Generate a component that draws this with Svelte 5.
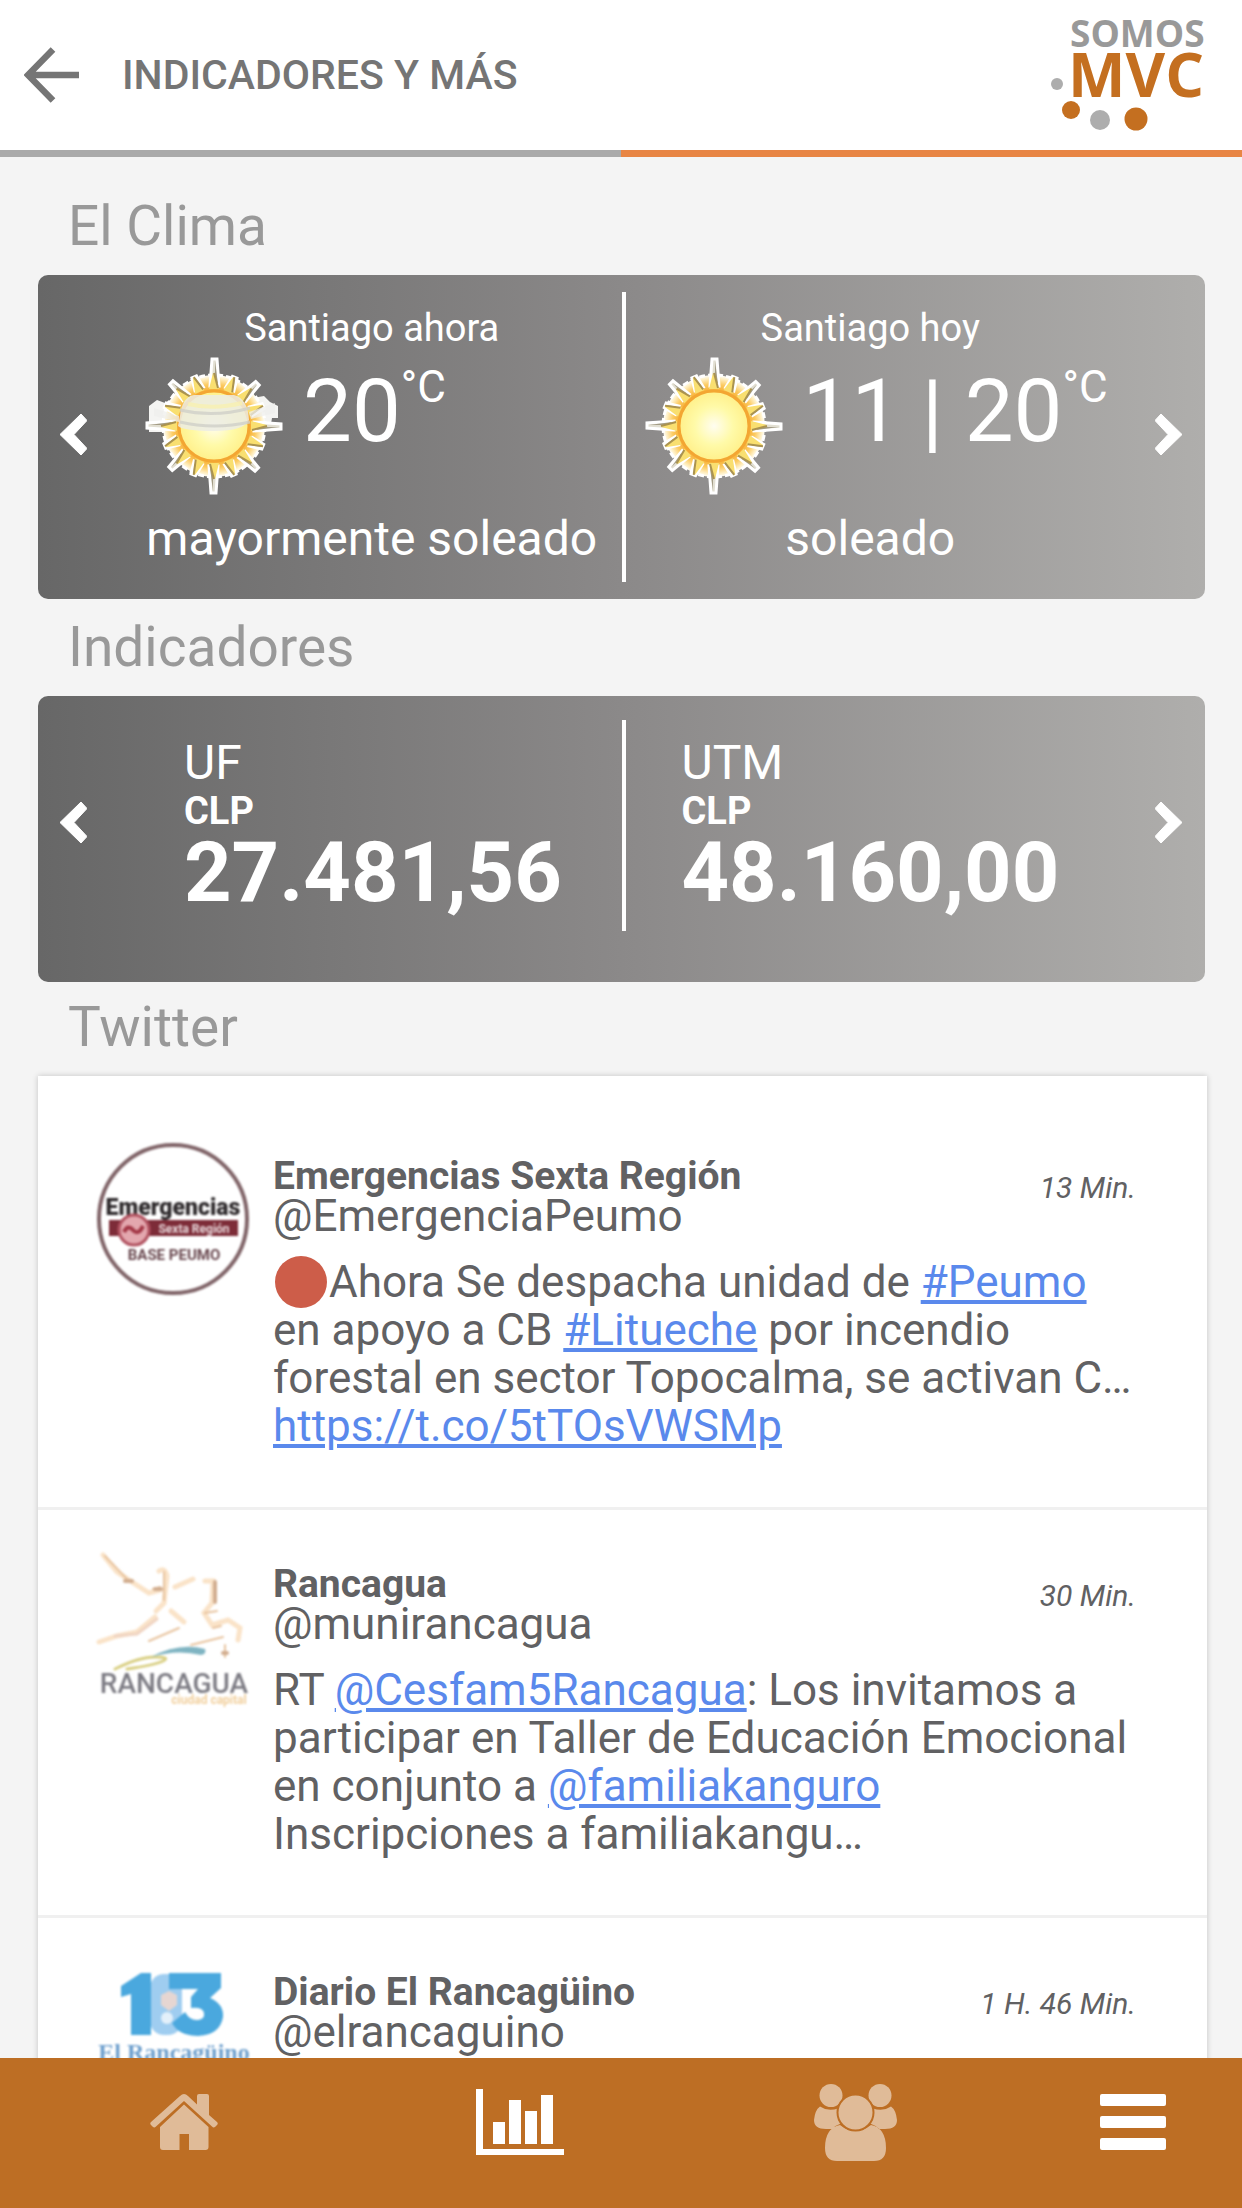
<script>
  const weather = [
    { place: 'Santiago ahora', temp: '20', sky: 'mayormente soleado', hazy: true },
    { place: 'Santiago hoy', temp: '11 | 20', sky: 'soleado', hazy: false }
  ];
  const indicators = [
    { name: 'UF', unit: 'CLP', value: '27.481,56' },
    { name: 'UTM', unit: 'CLP', value: '48.160,00' }
  ];
  const tweets = [
    {
      avatar: 'emergencias', name: 'Emergencias Sexta Región', handle: '@EmergenciaPeumo', time: '13 Min.', alert: true,
      parts: [
        { text: 'Ahora Se despacha unidad de ' },
        { link: '#Peumo' },
        { text: ' en apoyo a CB ' },
        { link: '#Litueche' },
        { text: ' por incendio forestal en sector Topocalma, se activan C… ' },
        { link: 'https://t.co/5tTOsVWSMp' }
      ]
    },
    {
      avatar: 'rancagua', name: 'Rancagua', handle: '@munirancagua', time: '30 Min.', alert: false,
      parts: [
        { text: 'RT ' },
        { link: '@Cesfam5Rancagua' },
        { text: ': Los invitamos a participar en Taller de Educación Emocional en conjunto a ' },
        { link: '@familiakanguro' },
        { text: ' Inscripciones a familiakangu…' }
      ]
    },
    { avatar: 'diario', name: 'Diario El Rancagüino', handle: '@elrancaguino', time: '1 H. 46 Min.', alert: false, parts: [] }
  ];
  // Sixteen rays: long on the axes and diagonals, short between them.
  const rays = Array.from({ length: 16 }, (_, i) => ({
    angle: i * 22.5,
    tip: i % 4 === 0 ? 67 : i % 2 === 0 ? 61 : 53
  }));
</script>

{#snippet sun(hazy)}
  <svg class="sun" viewBox="-74 -74 148 148" aria-hidden="true">
    <defs>
      <radialGradient id="core"><stop offset="0" stop-color="#fffdf0" /><stop offset=".55" stop-color="#fffaa8" /><stop offset="1" stop-color="#fff08a" /></radialGradient>
      <radialGradient id="halo"><stop offset=".66" stop-color="#f5a92c" /><stop offset=".82" stop-color="#fccb62" /><stop offset=".95" stop-color="#fff3cf" /><stop offset="1" stop-color="#fffdf6" /></radialGradient>
    </defs>
    {#if hazy}
      <path d="M-65-20l8-6 8 3 10-6V6h-26zM38-28l12-2 6 6 8 4V-8h-6l-2 12H38z" fill="#f4f4f2" />
    {/if}
    <circle r="51" fill="url(#halo)" stroke="#fff" stroke-width="3" stroke-dasharray="6 3" />
    {#each rays as ray}
      <g transform="rotate({ray.angle})">
        <path d="M-4-40L-2 {-ray.tip}H3L5-40z" fill="#e2dfd2" stroke="#fff" stroke-width="3" />
        <path d="M1-46L1 {-ray.tip + 2}L4-42z" fill="#a39c86" />
        <path d="M-5-37L-1-53L5-37z" fill="#f9df70" />
        <path d="M4-38L0-53" stroke="#ab934f" stroke-width="2" />
      </g>
    {/each}
    <circle r="35" fill="url(#core)" stroke="#f3a632" stroke-width="3" />
    {#if hazy}
      <path d="M-34-10Q-32-29-20-31H20Q34-27 35-6Q30 5 0 5T-36 0z" fill="#ecece4" opacity=".85" />
      <path d="M-34-16Q0-8 36-18M-34-4Q0 4 36-4" fill="none" stroke="#cfcfc8" stroke-width="3" opacity=".8" />
      <path d="M-26-22Q0-16 28-23" fill="none" stroke="#f7f0b0" stroke-width="4" opacity=".8" />
      <path d="M35-14l26-9v10l-24 6zM-35-10l-25-8v8l25 6z" fill="#efefec" opacity=".75" />
    {/if}
  </svg>
{/snippet}

{#snippet arrow(label, next)}
  <button class="arrow" class:next aria-label={label}>
    <svg viewBox="0 0 27 41" aria-hidden="true">
      <path d={next ? 'M0 6.500L6 0 27 20.500 6 41 0 34.500 13 20.500z' : 'M27 6.500L21 0 0 20.500 21 41 27 34.500 14 20.500z'} fill="#fff" stroke="#fff" stroke-linejoin="round" />
    </svg>
  </button>
{/snippet}

<div class="app">
  <header>
    <button class="back" aria-label="Volver">
      <svg viewBox="0 0 56 56" aria-hidden="true"><path d="M55 28H5M29 2.500L4 28l25 25.500" fill="none" stroke="#757575" stroke-width="6.500" /></svg>
    </button>
    <h1>INDICADORES Y MÁS</h1>
    <svg class="logo" viewBox="0 0 168 120" role="img" aria-label="Somos MVC">
      <text x="20" y="32" font-size="37" fill="#999">SOMOS</text>
      <text x="18" y="82" font-size="61" fill="#c46f20">MVC</text>
      <circle cx="7" cy="69" r="6" fill="#adadad" />
      <circle cx="21" cy="95" r="9" fill="#c46f20" />
      <circle cx="50" cy="105" r="10" fill="#adadad" />
      <circle cx="86" cy="104" r="11.500" fill="#c46f20" />
    </svg>
  </header>
  <div class="stripe"></div>

  <main>
    <h2>El Clima</h2>
    <section class="panel" aria-label="El Clima">
      {@render arrow('Anterior', false)}
      <div class="slides">
        {#each weather as w}
          <article class="weather">
            <p class="place">{w.place}</p>
            <div class="now">
              {@render sun(w.hazy)}
              <span class="temp">{w.temp}</span><span class="degree">°C</span>
            </div>
            <p class="sky">{w.sky}</p>
          </article>
        {/each}
      </div>
      {@render arrow('Siguiente', true)}
    </section>

    <h2>Indicadores</h2>
    <section class="panel money" aria-label="Indicadores">
      {@render arrow('Anterior', false)}
      <div class="slides">
        {#each indicators as item}
          <article class="indicator">
            <p class="code">{item.name}</p>
            <p class="unit">{item.unit}</p>
            <p class="value">{item.value}</p>
          </article>
        {/each}
      </div>
      {@render arrow('Siguiente', true)}
    </section>

    <h2>Twitter</h2>
    <section class="feed" aria-label="Twitter">
      {#each tweets as t}
        <article class="tweet">
          {#if t.avatar === 'emergencias'}
            <svg class="avatar" viewBox="0 0 162 162" aria-hidden="true">
              <circle cx="80" cy="82" r="74" fill="#fff" stroke="#806468" stroke-width="4" />
              <text x="80" y="78" font-size="23" font-weight="900" fill="#2e2a2c" text-anchor="middle">Emergencias</text>
              <path d="M16 83H145V99H16z" fill="#7d2c38" />
              <text x="101" y="96" font-size="12" font-weight="700" fill="#eadadd" text-anchor="middle">Sexta Región</text>
              <circle cx="41" cy="93" r="15" fill="#e3a7ae" stroke="#b15260" stroke-width="3" />
              <path d="M31 95q4-8 9-2t10-4" fill="none" stroke="#a33746" stroke-width="4" />
              <text x="81" y="123" font-size="15" font-weight="700" fill="#69484f" text-anchor="middle">BASE PEUMO</text>
            </svg>
          {:else if t.avatar === 'rancagua'}
            <svg class="avatar" viewBox="0 0 162 162" aria-hidden="true">
              <g fill="none" stroke-linecap="round">
                <path d="M10 10L24 27 36 35 56 48 67 45M66 26q6-4 8 5l-3 27-8 8M82 42l18-8M112 36h8l-1 22-8 10 8 12 16-5 12 8-2 12M62 72L44 87 24 91 6 97M78 66l13 11" stroke="#fae3c8" stroke-width="5" />
                <path d="M12 11L34 34M60 44l7-2M71 27v28M112 68l12-2M120 83l8-2M132 100v12M56 96L86 83M98 100l32-8" stroke="#e8c49f" stroke-width="2" />
                <path d="M32 36h7M122 37v20M62 44h6M130 108h4" stroke="#d2ae90" stroke-width="4" />
                <path d="M64 74L44 89 22 91" stroke="#f0d5c3" stroke-width="3" />
                <path d="M22 124Q46 112 62 112T70 116 34 124" stroke="#d9cf83" stroke-width="3" />
              </g>
              <path d="M58 112Q86 97 112 104 114 109 108 110 84 104 58 112z" fill="#7fb4c2" />
              <text x="81" y="148" font-size="28" font-weight="500" fill="#7c7b83" text-anchor="middle">RANCAGUA</text>
              <text x="116" y="159" font-size="12" font-weight="700" fill="#f1cf9c" text-anchor="middle">ciudad capital</text>
            </svg>
          {:else}
            <svg class="avatar" viewBox="0 0 162 162" aria-hidden="true">
              <rect x="57" y="21" width="32" height="61" rx="14" fill="#9fcdf0" />
              <path transform="translate(0 -2)" d="M28 35L48 22H58V84H38V43L28 46zM76 22H128V37L117 47Q131 53 130 66 127 84 105 85 86 85 79 72L92 61Q97 70 105 69 112 68 111 62 110 56 98 57V46L105 38H76z" fill="#4aa8de" />
              <path d="M68 42l8-4 8 4v10l-8 6-8-6z" fill="#e6d6d2" />
              <circle cx="74" cy="65" r="6" fill="#e3f0fa" />
              <text class="serif" x="81" y="107" font-size="24" font-weight="700" fill="#6d9fcd" text-anchor="middle">El Rancagüino</text>
            </svg>
          {/if}
          <div class="content">
            <div class="head">
              <div class="who">
                <h3>{t.name}</h3>
                <p>{t.handle}</p>
              </div>
              <span class="time">{t.time}</span>
            </div>
            <p class="body">{#if t.alert}<svg class="dot" viewBox="0 0 52 52" aria-hidden="true"><circle cx="26" cy="26" r="26" fill="#cd5d49" /></svg>{/if}{#each t.parts as part}{#if part.link}<a href="#tweet">{part.link}</a>{:else}{part.text}{/if}{/each}</p>
          </div>
        </article>
      {/each}
    </section>
  </main>

  <nav aria-label="Principal">
    <a href="#inicio" aria-label="Inicio">
      <svg class="home" viewBox="0 0 68 56" aria-hidden="true" fill="#e0bb98">
        <path d="M34 0Q36 0 38 2L47 10.500V2Q47 0 49 0H57Q59 0 59 2V21L67 28Q68.500 29.500 67 31L65 33Q63.500 34 62 32.500L34 7 6 32.500Q4.500 34 3 33L1 31Q-.5 29.500 1 28L30 2Q32 0 34 0z" />
        <path d="M34 10.500L58.500 33V53Q58.500 56 55.500 56H39V40H29.500V56H13Q10 56 10 53V33z" />
      </svg>
    </a>
    <a href="#indicadores" aria-label="Indicadores" aria-current="page">
      <svg class="chart" viewBox="0 0 88 66" aria-hidden="true" fill="#fff">
        <path d="M0 0H7V60H88V66H0zM17 33H29V55H17zM33 11H45V55H33zM49 22H61V55H49zM65 6H77V55H65z" />
      </svg>
    </a>
    <a href="#comunidad" aria-label="Comunidad">
      <svg class="people" viewBox="0 0 83 77" aria-hidden="true" fill="#e0bb98">
        <circle cx="17" cy="11.500" r="11.500" /><circle cx="66" cy="11.500" r="11.500" />
        <path d="M6 22.500Q14 28 24 24.500 22 34 27 39.500 22 41 18 45H12Q0 45 0 36 1 26 6 22.500zM77 22.500Q69 28 59 24.500 61 34 56 39.500 61 41 65 45H71Q83 45 83 36 82 26 77 22.500zM26 41Q41 53 57 41 72 44 72 64 72 77 60 77H23Q11 77 11 64 11 44 26 41z" />
        <circle cx="41.500" cy="28.500" r="18" stroke="#bd6e24" stroke-width="2" />
      </svg>
    </a>
    <button aria-label="Menú">
      <svg class="bars" viewBox="0 0 66 56" aria-hidden="true" fill="#fff">
        <rect width="66" height="12" rx="2" /><rect y="22" width="66" height="12" rx="2" /><rect y="44" width="66" height="12" rx="2" />
      </svg>
    </button>
  </nav>
</div>

<style>
  :global(body) { background: #f4f4f4; }
  .app {
    display: flex;
    flex-direction: column;
    height: 100vh;
    overflow: hidden;
    font-family: Roboto, "Liberation Sans", sans-serif;
  }
  h1, h2, h3, p { margin: 0; font-weight: 400; }
  button { border: 0; padding: 0; background: none; cursor: pointer; }
  svg { display: block; flex: none; }

  header {
    flex: none;
    display: flex;
    align-items: center;
    height: 150px;
    padding: 0 24px;
    background: #fff;
  }
  .back svg { width: 56px; height: 56px; }
  h1 { flex: 1; margin-left: 42px; font-size: 41px; line-height: 48px; font-weight: 500; color: #757575; }
  .logo { width: 168px; height: 120px; font-family: "Open Sans", sans-serif; font-weight: 700; }
  .stripe { flex: none; height: 7px; background: linear-gradient(90deg, #aaa 50%, #e88544 50%); }

  main { flex: 1; min-height: 0; overflow: hidden; padding: 21px 37px 0 38px; }
  h2 { padding: 16px 0 17px 30px; font-size: 55px; line-height: 64px; color: #999; }
  .money + h2 { padding-top: 13px; }

  .panel {
    display: flex;
    padding: 17px 0;
    border-radius: 10px;
    background: linear-gradient(90deg, #676767, #8b8989 50%, #afaeac);
    color: #fff;
  }
  .money { padding: 24px 0 51px; }
  .arrow { flex: none; width: 84px; padding: 0 0 6px 22px; }
  .arrow.next { padding: 0 22px 6px 34px; }
  .arrow svg { width: 27px; height: 41px; }
  .slides { flex: 1; display: grid; grid-template-columns: 1fr 1fr; }
  .slides article + article { border-left: 4px solid #fff; }

  .weather { padding: 12px 0 15px; text-align: center; }
  .weather + .weather { padding-right: 6px; }
  .place { font-size: 38px; line-height: 48px; }
  .now { display: flex; height: 159px; padding-left: 18px; align-items: flex-start; }
  .weather + .weather .now { padding-left: 14px; }
  .sun { width: 148px; height: 148px; margin-right: 15px; }
  .temp { margin-top: 11px; font-size: 87px; line-height: 96px; white-space: nowrap; }
  .degree { margin-top: 11px; font-size: 44px; line-height: 48px; }
  .sky { font-size: 48px; line-height: 56px; }

  .indicator { padding: 15px 0 16px 62px; }
  .indicator + .indicator { padding-left: 56px; }
  .code { font-size: 48px; line-height: 56px; }
  .unit { font-size: 38px; line-height: 40px; font-weight: 700; }
  .value { font-size: 83px; line-height: 84px; font-weight: 700; }

  .feed { margin-right: -2px; padding-top: 26px; background: #fff; box-shadow: 0 0 6px rgba(0, 0, 0, 0.2); }
  .tweet { display: flex; padding: 35px 67px 57px 55px; border-bottom: 3px solid #f0f0f0; color: #616163; }
  .avatar { width: 162px; height: 162px; filter: blur(1px); }
  .serif { font-family: "Liberation Serif", serif; }
  .content { flex: 1; min-width: 0; margin-left: 18px; padding-top: 19px; }
  .head { display: flex; justify-content: space-between; }
  h3 { font-size: 39px; line-height: 40px; font-weight: 700; }
  .who p { font-size: 44px; line-height: 40px; }
  .time { margin: 14px 4px 0 0; font-size: 30px; line-height: 36px; font-style: italic; }
  .body { margin-top: 22px; font-size: 44px; line-height: 48px; }
  .body a { color: #5a89ec; text-decoration: underline; }
  .dot { display: inline-block; width: 52px; height: 52px; margin: -10px 2px; vertical-align: -1px; }

  nav {
    flex: none;
    display: grid;
    grid-template-columns: 368fr 303fr 368fr 188fr;
    height: 150px;
    padding-right: 15px;
    background: #bd6e24;
  }
  nav a, nav button { display: flex; justify-content: center; align-items: center; padding-bottom: 22px; }
  .home { width: 68px; height: 56px; }
  .chart { width: 88px; height: 66px; }
  .people { width: 83px; height: 77px; }
  .bars { width: 66px; height: 56px; }
</style>
